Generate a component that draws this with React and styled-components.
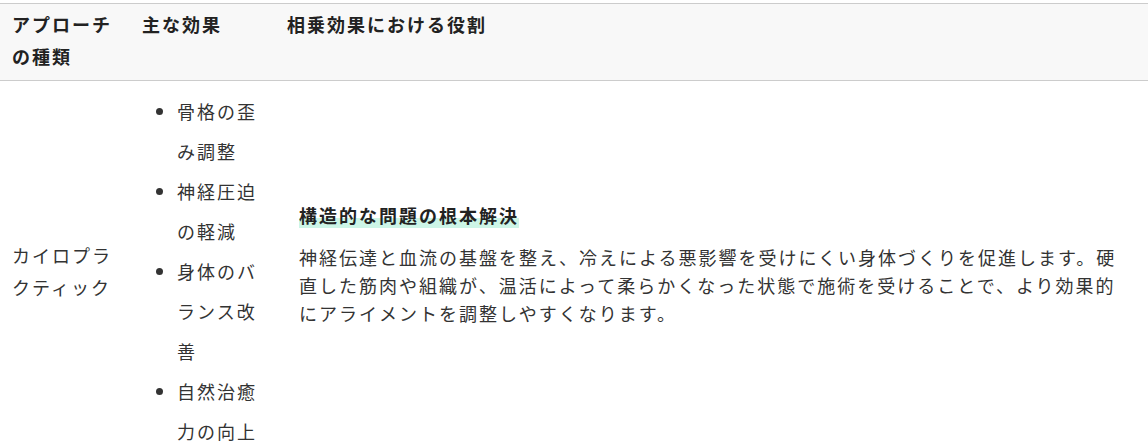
import React from "react";
import styled, { createGlobalStyle } from "styled-components";

const Global = createGlobalStyle`
  html, body { margin: 0; padding: 0; background: #fff; }
  body {
    font-family: "Noto Sans CJK JP", "Noto Sans", sans-serif;
    font-size: 18px;
    color: #333;
  }
`;

const Wrap = styled.div`
  padding-top: 3px;
`;

const Table = styled.table`
  width: 100%;
  border-collapse: collapse;
  table-layout: fixed;
  letter-spacing: 2px;
`;

const HeadRow = styled.tr`
  background: #f8f8f8;
  border-top: 1px solid #cccccc;
  border-bottom: 1px solid #cccccc;
`;

const Th = styled.th`
  text-align: left;
  font-weight: 700;
  color: #222;
  line-height: 32px;
  padding: 4px 12px 8px;
  vertical-align: top;
`;

const Td = styled.td`
  padding: 10px 12px 14px;
  vertical-align: middle;
  line-height: 32px;
  color: #333;
`;

const List = styled.ul`
  margin: 0;
  padding-left: 35px;
  line-height: 40px;
`;

const Item = styled.li``;

const Role = styled.div`
  padding: 0 12px;
`;

const RoleTitle = styled.div`
  font-weight: 700;
  color: #222;
  line-height: 28px;
  margin-bottom: 14px;
`;

const Mark = styled.span`
  background: linear-gradient(transparent 62%, #cdf5e7 62%);
`;

const RoleText = styled.p`
  margin: 0 0 14px;
  line-height: 28px;
`;

const effects = [
  "骨格の歪み調整",
  "神経圧迫の軽減",
  "身体のバランス改善",
  "自然治癒力の向上",
];

export default function App() {
  return (
    <>
      <Global />
      <Wrap>
        <Table>
          <colgroup>
            <col style={{ width: 130 }} />
            <col style={{ width: 145 }} />
            <col />
          </colgroup>
          <thead>
            <HeadRow>
              <Th>アプローチの種類</Th>
              <Th>主な効果</Th>
              <Th>相乗効果における役割</Th>
            </HeadRow>
          </thead>
          <tbody>
            <tr>
              <Td>カイロプラクティック</Td>
              <Td>
                <List>
                  {effects.map((e) => (
                    <Item key={e}>{e}</Item>
                  ))}
                </List>
              </Td>
              <Td>
                <Role>
                  <RoleTitle>
                    <Mark>構造的な問題の根本解決</Mark>
                  </RoleTitle>
                  <RoleText>
                    神経伝達と血流の基盤を整え、冷えによる悪影響を受けにくい身体づくりを促進します。硬直した筋肉や組織が、温活によって柔らかくなった状態で施術を受けることで、より効果的にアライメントを調整しやすくなります。
                  </RoleText>
                </Role>
              </Td>
            </tr>
          </tbody>
        </Table>
      </Wrap>
    </>
  );
}
